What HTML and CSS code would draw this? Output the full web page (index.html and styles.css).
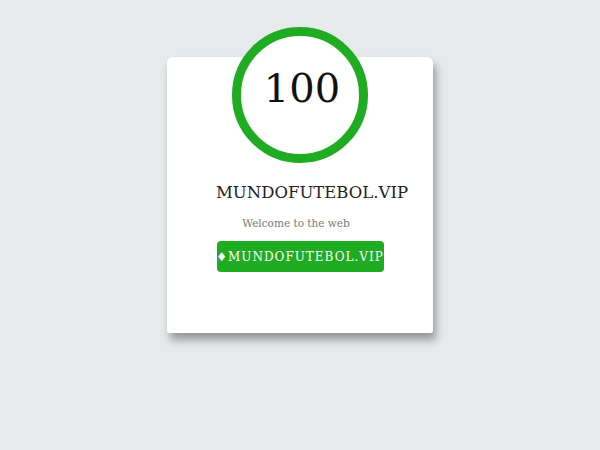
FILE: index.html
```html
<!DOCTYPE html>
<html>
<head>
<meta charset="utf-8">
<link rel="stylesheet" href="styles.css">
</head>
<body>
<div class="page">
  <div class="card">
    <div class="ring"><span class="score">100</span></div>
    <h1 class="title">MUNDOFUTEBOL.VIP</h1>
    <p class="welcome">Welcome to the web</p>
    <a class="btn" href="#">♦MUNDOFUTEBOL.VIP</a>
  </div>
</div>
</body>
</html>
```
FILE: styles.css
```css
html, body {
  margin: 0;
  padding: 0;
}
body {
  background: #e6eaeb;
  font-family: "DejaVu Serif", serif;
  width: 600px;
  height: 450px;
  overflow: hidden;
}
.page {
  display: flex;
  justify-content: center;
  padding-top: 57px;
}
.card {
  width: 266px;
  height: 276px;
  background: #fff;
  border-radius: 6px 6px 2px 2px;
  box-shadow: 3px 7px 9px rgba(0, 0, 0, 0.35);
  display: flex;
  flex-direction: column;
  align-items: center;
  box-sizing: border-box;
}
.ring {
  width: 136px;
  height: 136px;
  box-sizing: border-box;
  border: 9px solid #1fab22;
  border-radius: 50%;
  margin-top: -30px;
  background: #fff;
  display: flex;
  justify-content: center;
}
.score {
  font-size: 40px;
  line-height: 1;
  color: #111;
  margin-top: 32px;
  margin-left: 4px;
}
.title {
  font-size: 16.5px;
  font-weight: normal;
  color: #222;
  margin: 19px 0 0 24px;
  line-height: 22px;
  white-space: nowrap;
}
.welcome {
  font-size: 10.5px;
  color: #7a7a7a;
  margin: 12px 0 0 -8px;
  line-height: 14px;
}
.btn {
  display: flex;
  align-items: center;
  justify-content: center;
  margin-top: 11px;
  width: 167px;
  height: 31px;
  box-sizing: border-box;
  background: #1fab22;
  color: #fff;
  border-radius: 4px;
  font-size: 12px;
  letter-spacing: 1px;
  text-decoration: none;
  white-space: nowrap;
}
```
